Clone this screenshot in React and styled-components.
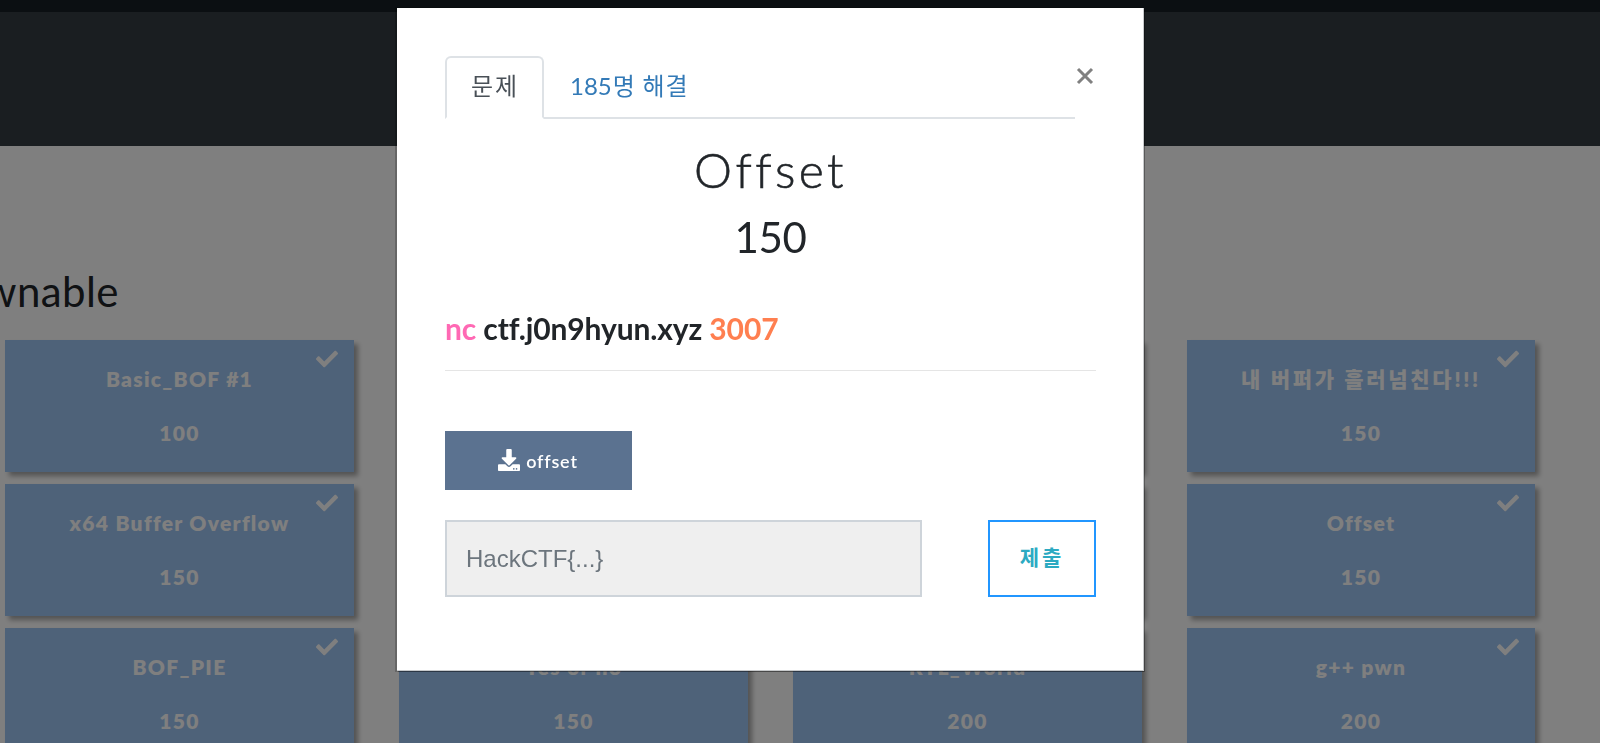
import React from "react";
import styled, { createGlobalStyle } from "styled-components";
import { FaCheck, FaDownload } from "react-icons/fa";

const GlobalStyle = createGlobalStyle`
  *, *::before, *::after { box-sizing: border-box; }
  html, body { margin: 0; overflow: hidden; }
  body {
    background: #fff;
    color: #212529;
    font-family: Lato, "Noto Sans CJK KR", sans-serif;
    font-size: 24px;
    line-height: 1.5;
  }
`;

const Page = styled.div`
  height: 743px;
  overflow: hidden;
`;

const NavStrip = styled.div`
  height: 12px;
  background: #161e24;
`;

const Jumbotron = styled.header`
  height: 134px;
  background: #343c42;
`;

const Board = styled.main`
  padding: 114px 0 0 5px;
`;

const Category = styled.h3`
  margin: 0 0 17px -47px;
  font-size: 42px;
  font-weight: 400;
  letter-spacing: 0.4px;
  line-height: 63px;
`;

const Grid = styled.div`
  display: grid;
  grid-template-columns: repeat(3, 349px) 348px;
  grid-auto-rows: 132px;
  column-gap: 45px;
  row-gap: 12px;
`;

const Card = styled.button`
  position: relative;
  display: flex;
  flex-direction: column;
  align-items: center;
  padding: 21px 0 0;
  border: 0;
  background: #9dc4f2;
  box-shadow: 4px 4px 5px rgba(0, 0, 0, 0.35);
  color: #fff;
  font-family: inherit;
  font-size: 21px;
  font-weight: 800;
  letter-spacing: 1.3px;
  line-height: 36px;
`;

const CardLine = styled.span`
  height: 36px;
  letter-spacing: ${(p) => (p.$wide ? "2.7px" : "inherit")};
  & + & { margin-top: 18px; }
`;

const Solved = styled(FaCheck)`
  position: absolute;
  top: 8px;
  right: 16px;
  width: 22px;
  height: 22px;
`;

const Backdrop = styled.div`
  position: fixed;
  inset: 0;
  display: flex;
  align-items: flex-start;
  padding: 8px 0 0 397px;
  background: rgba(0, 0, 0, 0.5);
`;

const Modal = styled.section`
  width: 747px;
  height: 663px;
  padding: 48px 47px 0 48px;
  background: #fff;
  border: solid #c8cacc;
  border-width: 0 1px 1px 0;
  box-shadow: -1px 0 0 1px rgba(0, 0, 0, 0.2), 1px 1px 0 0 rgba(0, 0, 0, 0.3);
`;

const ModalTop = styled.div`
  display: flex;
  height: 63px;
`;

const Tabs = styled.nav`
  display: flex;
  width: 630px;
  border-bottom: 2px solid #dee2e6;
`;

const Tab = styled.a`
  height: 63px;
  min-width: 99px;
  padding: 10px 22px 0 24px;
  border: 2px solid;
  border-color: ${(p) => (p.$active ? "#dee2e6 #dee2e6 #fff" : "transparent")};
  border-radius: 6px 6px 0 0;
  color: ${(p) => (p.$active ? "#495057" : "#337ab7")};
  line-height: 35px;
  white-space: nowrap;
`;

const Hangul = styled.span`
  letter-spacing: ${(p) => (p.$tight ? "0.8px" : "2px")};
  margin-left: ${(p) => (p.$tight ? "1px" : "0")};
`;

const Close = styled.button`
  width: 20px;
  height: 40px;
  padding: 0;
  border: 0;
  background: none;
  color: #808080;
  svg { display: block; margin: -1px 0 0 1px; }
`;

const Title = styled.h3`
  margin: 15px 0 0;
  font-size: 48px;
  font-weight: 300;
  letter-spacing: 3.4px;
  line-height: 72px;
  text-align: center;
  -webkit-text-stroke: 0.6px currentColor;
`;

const Points = styled.h4`
  margin: 0;
  font-size: 42px;
  font-weight: 400;
  letter-spacing: -0.4px;
  line-height: 62px;
  text-align: center;
`;

const Connection = styled.p`
  margin: 38px 0 0;
  height: 65px;
  border-bottom: 1px solid #e5e5e5;
  font-size: 30px;
  font-weight: 700;
  font-variant-ligatures: none;
  letter-spacing: -0.12px;
  line-height: 45px;
`;

const Command = styled.span`
  color: #ff69b4;
`;

const Port = styled.span`
  color: #ff7f50;
`;

const FileButton = styled.a`
  display: flex;
  align-items: center;
  justify-content: center;
  gap: 6px;
  width: 187px;
  height: 59px;
  margin-top: 60px;
  padding: 1px 1px 0 0;
  background: #5b7290;
  color: #fff;
  font-size: 18px;
  font-weight: 600;
  letter-spacing: 0.8px;
  svg { width: 22px; height: 22px; margin-top: -2px; }
`;

const AnswerRow = styled.form`
  display: flex;
  justify-content: space-between;
  margin-top: 30px;
`;

const FlagInput = styled.input`
  width: 477px;
  height: 77px;
  padding: 0 19px;
  border: 2px solid #ced4da;
  border-radius: 0;
  background: #efefef;
  font: 24px "Liberation Sans", sans-serif;
  &::placeholder { color: #6c757d; opacity: 1; }
`;

const Submit = styled.button`
  width: 108px;
  height: 77px;
  padding: 0 0 5px;
  border: 2px solid #2196ff;
  background: #fff;
  color: #2caac2;
  font-family: inherit;
  font-size: 21px;
  font-weight: 700;
  letter-spacing: 3px;
`;

const challenges = [
  ["Basic_BOF #1", 100],
  ["Basic_BOF #2", 100],
  ["Basic_FSB", 100],
  ["내 버퍼가 흘러넘친다!!!", 150],
  ["x64 Buffer Overflow", 150],
  ["x64 Simple_size_BOF", 150],
  ["Simple_Overflow_ver_2", 150],
  ["Offset", 150],
  ["BOF_PIE", 150],
  ["Yes or no", 150],
  ["RTL_World", 200],
  ["g++ pwn", 200],
];

const hasHangul = (text) => /[가-힣]/.test(text);

export default function App() {
  return (
    <>
      <GlobalStyle />
      <Page>
        <NavStrip />
        <Jumbotron />
        <Board>
          <Category>Pwnable</Category>
          <Grid>
            {challenges.map(([name, points]) => (
              <Card key={name}>
                <Solved />
                <CardLine $wide={hasHangul(name)}>{name}</CardLine>
                <CardLine>{points}</CardLine>
              </Card>
            ))}
          </Grid>
        </Board>
      </Page>
      <Backdrop>
        <Modal>
          <ModalTop>
            <Tabs>
              <Tab $active>
                <Hangul>문제</Hangul>
              </Tab>
              <Tab>
                185<Hangul $tight>명 해결</Hangul>
              </Tab>
            </Tabs>
            <Close aria-label="Close">
              <svg width="18" height="18" viewBox="0 0 18 18" fill="none" stroke="currentColor" strokeWidth="3">
                <path d="M2 2L16 16M16 2L2 16" />
              </svg>
            </Close>
          </ModalTop>
          <Title>Offset</Title>
          <Points>150</Points>
          <Connection>
            <Command>nc</Command> ctf.j0n9hyun.xyz <Port>3007</Port>
          </Connection>
          <FileButton>
            <FaDownload />
            offset
          </FileButton>
          <AnswerRow>
            <FlagInput placeholder="HackCTF{...}" />
            <Submit type="button">제출</Submit>
          </AnswerRow>
        </Modal>
      </Backdrop>
    </>
  );
}
